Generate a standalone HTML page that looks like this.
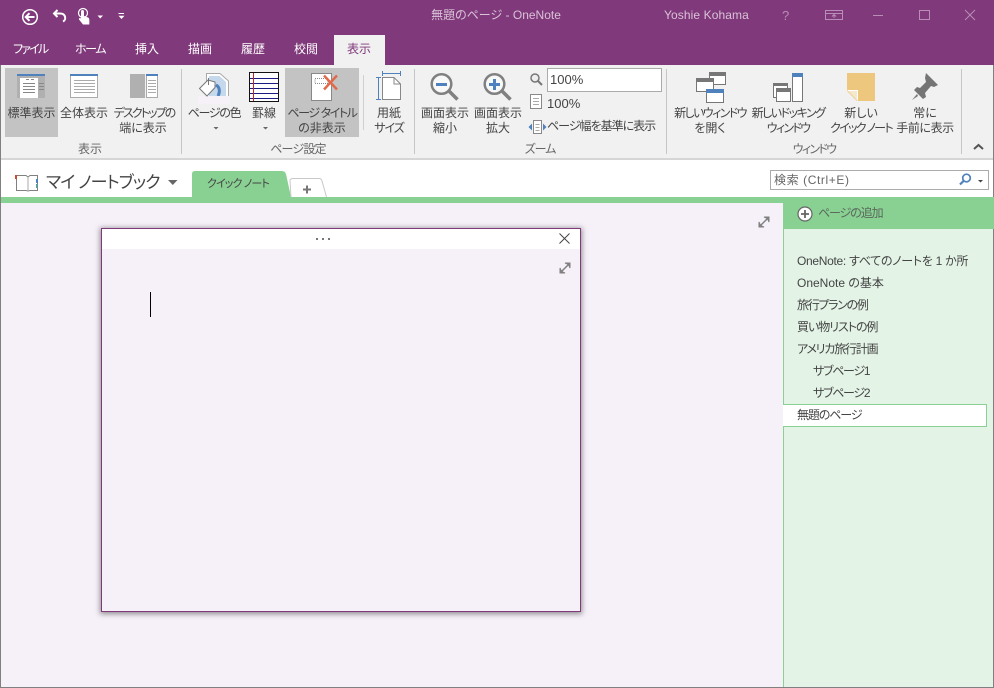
<!DOCTYPE html>
<html lang="ja"><head><meta charset="utf-8"><title>無題のページ - OneNote</title>
<style>
html,body{margin:0;padding:0;width:994px;height:688px;overflow:hidden;background:#f6f0f8;}
body{position:relative;font-family:"Liberation Sans","Noto Sans CJK JP",sans-serif;font-size:12px;color:#444;font-feature-settings:"palt";}
.a{position:absolute;}
.t{position:absolute;white-space:nowrap;line-height:15px;height:15px;color:#444;font-size:12px;}
.c{text-align:center;}
.m{color:#fff;font-size:12px;}
.g{color:#666;}
.p{position:absolute;left:797px;white-space:nowrap;font-size:12px;line-height:16px;color:#444;}
svg{position:absolute;overflow:visible;}
.sep{position:absolute;top:69px;width:1px;height:85px;background:#c6c6c6;}
</style></head><body>
<!-- title bar -->
<div class="a" style="left:0;top:0;width:994px;height:65px;background:#80397b;"></div>
<div class="a" style="left:0;top:65px;width:994px;height:93px;background:#f1f1f1;"></div>
<div class="a" style="left:0;top:158px;width:994px;height:2px;background:#d6d6d6;"></div>
<div class="a" style="left:0;top:160px;width:994px;height:37px;background:#fff;"></div>
<div class="a" style="left:0;top:197px;width:994px;height:6px;background:#89d093;"></div>
<div class="a" style="left:0;top:65px;width:1px;height:622px;background:#808080;"></div>
<div class="a" style="left:993px;top:65px;width:1px;height:622px;background:#808080;"></div>
<div class="a" style="left:0;top:687px;width:994px;height:1px;background:#808080;"></div>

<!-- QAT -->
<svg style="left:0;top:0" width="140" height="32" fill="none" stroke="#fff">
<circle cx="30" cy="17" r="7.3" stroke-width="1.5"/><path d="M34.500 17H26M29.500 13.200L25.700 17L29.500 20.800" stroke-width="2"/>
<path d="M63 21.500C66.500 20 66 13.500 60 13.500H54M57.500 10L54 13.500L57.500 17" stroke-width="2"/>
<path d="M83 24.500L79 19.500C78.500 18 80 17.500 81 18.500V11.500C81 9.500 84 9.500 84 11.500V16L88 17.500C89.500 18 89.500 20 89.300 24.500Z" fill="#fff" stroke="none"/>
<circle cx="83" cy="13" r="4.500" stroke-width="1.200"/>
<path d="M97.500 15.500H103L100.200 18.500Z" fill="#fff" stroke="none"/>
<path d="M118.500 13.500H124" stroke-width="1"/><path d="M118.500 15.800H124.500L121.500 19Z" fill="#fff" stroke="none"/>
</svg>
<div class="t c" style="left:396px;width:200px;top:8px;color:#d9c3d7;">無題のページ - OneNote</div>
<div class="t" style="left:664px;top:8px;color:#d9c3d7;letter-spacing:.1px;">Yoshie Kohama</div>
<svg style="left:770px;top:0" width="224" height="32" fill="none" stroke="#b98db6">
<text x="12" y="20" font-size="13" fill="#b98db6" stroke="none" font-family="Liberation Sans">?</text>
<path d="M55.500 10.500H72.500V19.500H55.500ZM55.500 13.500H72.500M64 18V15M62 16.500L64 14.500L66 16.500"/>
<path d="M103 15.500H113"/>
<path d="M149.500 10.500H159.500V19.500H149.500Z"/>
<path d="M195 10L205 20M205 10L195 20"/>
</svg>

<!-- tabs -->
<div class="t m" style="left:13px;top:42px;letter-spacing:-1.8px;">ファイル</div>
<div class="t m" style="left:75px;top:42px;letter-spacing:-1.4px;">ホーム</div>
<div class="t m" style="left:135px;top:42px;">挿入</div>
<div class="t m" style="left:188px;top:42px;">描画</div>
<div class="t m" style="left:241px;top:42px;">履歴</div>
<div class="t m" style="left:294px;top:42px;">校閲</div>
<div class="a" style="left:334px;top:35px;width:51px;height:30px;background:#f1f1f1;"></div>
<div class="t" style="left:347px;top:42px;color:#80397b;">表示</div>

<!-- highlighted buttons -->
<div class="a" style="left:5px;top:68px;width:53px;height:69px;background:#c3c3c3;"></div>
<div class="a" style="left:285px;top:68px;width:74px;height:69px;background:#c3c3c3;"></div>

<!-- ribbon icons -->
<svg style="left:0;top:65px" width="994" height="95" fill="none" stroke="none">
<!-- standard view -->
<rect x="17" y="9" width="28" height="24" fill="#b0b0b0"/><rect x="17" y="9" width="28" height="2" fill="#4f81bd"/>
<rect x="20" y="13" width="18" height="20" fill="#fff"/>
<path d="M23 18.500H35M23 21.500H35M23 24.500H35M23 27.500H35M39 18.500H44M39 21.500H44M39 24.500H44M26 14.500H29M31 14.500H34" stroke="#888"/>
<!-- full page view -->
<rect x="70.500" y="9.500" width="27" height="23" fill="#fff" stroke="#aaa"/><rect x="70" y="9" width="28" height="2" fill="#4f81bd"/>
<path d="M74 15.500H95M74 18.500H95M74 21.500H95M74 24.500H95M74 27.500H95" stroke="#aaa"/>
<!-- dock -->
<rect x="130" y="9" width="15" height="24" fill="#b0b0b0"/><rect x="146.500" y="9.500" width="11" height="23" fill="#fff" stroke="#aaa"/><rect x="146" y="9" width="12" height="2" fill="#4f81bd"/>
<path d="M148 15.500H156M148 18.500H156M148 21.500H156M148 24.500H156M148 27.500H156" stroke="#aaa"/>
<!-- page color -->
<path d="M206.500 8.500H220L228.500 16V37.500H206.500Z" fill="#fff" stroke="#aaa"/>
<path d="M209 11H219.500L226 17V33H209Z" fill="#c5d8ec"/>
<path d="M216 20C220 22 220 27 218 31" stroke="#4f81bd" stroke-width="3"/>
<rect x="198" y="31" width="32" height="8" fill="#f6f0f8"/>
<path d="M208 15L199.500 23.500L207 31L215 22.500V17Z" fill="#fff" stroke="#777"/>
<path d="M208.500 13V20" stroke="#777"/>
<!-- rule lines -->
<rect x="249.500" y="7.500" width="29" height="29" fill="#fff" stroke="#111"/>
<path d="M250 13.500H278M250 18.500H278M250 23.500H278M250 28.500H278M250 33.500H278" stroke="#1a1a80"/>
<path d="M253.500 8V36" stroke="#d02020"/>
<!-- hide title -->
<rect x="311.500" y="8.500" width="20" height="27" fill="#fff" stroke="#888"/>
<path d="M315 13.500H328V18.500H315Z" stroke="#888" stroke-dasharray="1 1"/>
<path d="M324 10.500L337 24.500M337 10.500L324 24.500" stroke="#e0694a" stroke-width="2.400"/>
<!-- paper size -->
<path d="M378.500 12V35M376 12.500H381M376 34.500H381" stroke="#4f81bd"/>
<path d="M382.500 8.500H400.500M382.500 6V11M400.500 6V11" stroke="#4f81bd"/>
<path d="M382.500 12.500H394L400.500 19V34.500H382.500Z" fill="#fff" stroke="#888"/><path d="M394 12.500V19H400.500" stroke="#888"/>
<!-- zoom out -->
<circle cx="441.500" cy="19" r="9.800" fill="#f8f8f8" stroke="#808080" stroke-width="2.500"/><path d="M449 26L457.500 34.500" stroke="#808080" stroke-width="3.500"/><path d="M436 19.500H447" stroke="#4f81bd" stroke-width="3"/>
<!-- zoom in -->
<circle cx="494.500" cy="19" r="9.800" fill="#f8f8f8" stroke="#808080" stroke-width="2.500"/><path d="M502 26L510.500 34.500" stroke="#808080" stroke-width="3.500"/><path d="M489 19.500H500M494.500 14V25" stroke="#4f81bd" stroke-width="3"/>
<!-- small zoom -->
<circle cx="535" cy="13" r="4" fill="#eee" stroke="#777" stroke-width="1.500"/><path d="M538 16L542 20" stroke="#777" stroke-width="2"/>
<!-- 100% page -->
<rect x="530.500" y="29.500" width="11" height="14" fill="#fff" stroke="#888"/><path d="M533 33.500H539M533 36.500H539M533 39.500H539" stroke="#aaa"/>
<!-- page width -->
<rect x="533.500" y="55.500" width="8" height="13" fill="#fff" stroke="#888"/><path d="M535.500 59.500H539.500M535.500 62.500H539.500M535.500 65.500H539.500" stroke="#aaa"/>
<path d="M532 58.500V65.500L528.500 62ZM543 58.500V65.500L546.500 62Z" fill="#4f81bd"/>
<!-- new window -->
<rect x="709.500" y="7.500" width="16" height="12" fill="#fff" stroke="#777"/><rect x="709" y="7" width="17" height="4" fill="#777"/>
<rect x="696.500" y="13.500" width="17" height="13" fill="#fff" stroke="#777"/><rect x="696" y="13" width="18" height="4" fill="#777"/>
<rect x="706.500" y="24.500" width="17" height="13" fill="#fff" stroke="#777"/><rect x="706" y="24" width="18" height="4" fill="#4f81bd"/>
<!-- new docked -->
<rect x="773.500" y="18.500" width="14" height="14" fill="#fff" stroke="#777"/><rect x="773" y="18" width="15" height="3" fill="#777"/>
<rect x="776.500" y="23.500" width="14" height="13" fill="#fff" stroke="#777"/><rect x="776" y="23" width="15" height="4" fill="#777"/>
<rect x="792.500" y="8.500" width="10" height="28" fill="#fff" stroke="#777"/><rect x="792" y="8" width="11" height="4" fill="#4f81bd"/>
<!-- quick note -->
<path d="M847 8H875V36H857L847 26Z" fill="#edc77e"/><path d="M847.500 25.500H857.500V35.500" fill="#f6e8cc" stroke="#fff"/>
<!-- pin -->
<path d="M926 8L938 20L934 22L931 21L925 28L926 32L923 34L914 25L917 22L920 23L926 17L925 13Z" fill="#757575"/><path d="M917 29L912 35L918 31Z" fill="#757575"/>
<!-- dropdown carets -->
<path d="M213.500 62H218.500L216 64.500Z M263 62H268L265.500 64.500Z" fill="#666"/>
<path d="M651 13.500H656.500L653.800 16.500Z" fill="#666"/>
<path d="M974 84L978.500 80L983 84" stroke="#555" stroke-width="2"/>
</svg>

<div class="t c" style="left:5px;width:53px;top:106px;">標準表示</div>
<div class="t c" style="left:58px;width:52px;top:106px;">全体表示</div>
<div class="t c" style="left:110px;width:68px;top:106px;letter-spacing:-1.9px;">デスクトップの</div>
<div class="t c" style="left:110px;width:66px;top:121px;">端に表示</div>
<div class="t c g" style="left:60px;width:60px;top:142px;">表示</div>
<div class="sep" style="left:181px;"></div>

<div class="t c" style="left:184px;width:60px;top:106px;letter-spacing:-1.3px;">ページの色</div>
<div class="t c" style="left:245px;width:38px;top:106px;">罫線</div>
<div class="t c" style="left:285px;width:74px;top:106px;letter-spacing:-1.4px;">ページ タイトル</div>
<div class="t c" style="left:285px;width:74px;top:121px;">の非表示</div>
<div class="t c g" style="left:268px;width:60px;top:142px;letter-spacing:-.8px;">ページ設定</div>
<div class="a" style="left:363px;top:75px;width:1px;height:55px;background:#d0d0d0;"></div>
<div class="t c" style="left:369px;width:40px;top:106px;">用紙</div>
<div class="t c" style="left:369px;width:40px;top:121px;letter-spacing:-1.1px;">サイズ</div>
<div class="sep" style="left:414px;"></div>

<div class="t c" style="left:418px;width:54px;top:106px;">画面表示</div>
<div class="t c" style="left:418px;width:54px;top:121px;">縮小</div>
<div class="t c" style="left:471px;width:54px;top:106px;">画面表示</div>
<div class="t c" style="left:471px;width:54px;top:121px;">拡大</div>
<div class="a" style="left:547px;top:68px;width:113px;height:22px;background:#fff;border:1px solid #ababab;"></div>
<div class="t" style="left:550px;top:72px;font-size:13px;">100%</div>
<div class="t" style="left:547px;top:96px;font-size:13px;">100%</div>
<div class="t" style="left:547px;top:119px;letter-spacing:-1px;">ページ幅を基準に表示</div>
<div class="t c g" style="left:510px;width:60px;top:142px;letter-spacing:-1px;">ズーム</div>
<div class="sep" style="left:666px;"></div>

<div class="t c" style="left:670px;width:80px;top:106px;letter-spacing:-1.6px;">新しいウィンドウ</div>
<div class="t c" style="left:670px;width:80px;top:121px;">を開く</div>
<div class="t c" style="left:748px;width:80px;top:106px;letter-spacing:-1.5px;">新しいドッキング</div>
<div class="t c" style="left:748px;width:80px;top:121px;letter-spacing:-1.7px;">ウィンドウ</div>
<div class="t c" style="left:828px;width:66px;top:106px;">新しい</div>
<div class="t c" style="left:828px;width:66px;top:121px;letter-spacing:-1.7px;">クイック ノート</div>
<div class="t c" style="left:892px;width:66px;top:106px;">常に</div>
<div class="t c" style="left:892px;width:66px;top:121px;letter-spacing:-.4px;">手前に表示</div>
<div class="t c g" style="left:784px;width:60px;top:142px;letter-spacing:-1.7px;">ウィンドウ</div>
<div class="sep" style="left:961px;"></div>

<!-- notebook row -->
<svg style="left:0;top:160px" width="340" height="40" fill="none">
<path d="M16.500 15.500V30.500H26L28 31L30 30.500H37.500V15.500H30L28 17L26 15.500Z" stroke="#808080" fill="#fff"/>
<path d="M28 17V30" stroke="#aaa"/>
<rect x="15" y="15" width="2" height="4" fill="#d24726"/>
<rect x="36" y="19" width="2" height="4" fill="#4f81bd"/><rect x="36" y="24" width="2" height="4" fill="#5a9a9a"/>
<path d="M168 20H177.500L172.800 25Z" fill="#666"/>
<path d="M192 37V14Q192 11 195 11H282Q285 11 286 14L291 37Z" fill="#89d093"/>
<path d="M291 37L290 21Q290 18.500 293 18.500H319Q321.500 18.500 322 21L326.500 37" fill="#fff" stroke="#c8c8c8"/>
<path d="M303 29.500H311M307 25.500V33.500" stroke="#777" stroke-width="2"/>
</svg>
<div class="t" style="left:46px;top:172px;font-size:17px;line-height:22px;height:22px;color:#444;letter-spacing:-.9px;">マイ ノートブック</div>
<div class="t" style="left:207px;top:177px;font-size:11px;color:#444;letter-spacing:-.9px;">クイック ノート</div>
<div class="a" style="left:770px;top:170px;height:20px;background:#fff;border:1px solid #ababab;box-sizing:border-box;width:219px;"></div>
<div class="t" style="left:774px;top:173px;color:#666;letter-spacing:.6px;">検索 (Ctrl+E)</div>
<svg style="left:950px;top:170px" width="40" height="22" fill="none">
<circle cx="16.500" cy="8" r="3.800" stroke="#4f81bd" stroke-width="1.700"/><path d="M13.500 11L10 14.500" stroke="#4f81bd" stroke-width="2.200"/>
<path d="M28 10H33L30.500 12.500Z" fill="#444"/>
</svg>

<!-- sidebar -->
<div class="a" style="left:783px;top:203px;width:210px;height:484px;background:#e3f3e6;"></div>
<div class="a" style="left:783px;top:203px;width:1px;height:484px;background:#89d093;"></div>
<div class="a" style="left:783px;top:197px;width:211px;height:32px;background:#89d093;"></div>
<svg style="left:790px;top:200px" width="30" height="30" fill="none">
<circle cx="15" cy="14" r="7" fill="#fff" stroke="#666" stroke-width="1.200"/><path d="M11 14H19M15 10V18" stroke="#666" stroke-width="1.800"/>
</svg>
<div class="t" style="left:818px;top:206px;color:#5a6a5c;letter-spacing:-1.1px;">ページの追加</div>
<div class="p" style="top:253px;letter-spacing:-.3px;">OneNote: すべてのノートを 1 か所</div>
<div class="p" style="top:275px;">OneNote の基本</div>
<div class="p" style="top:297px;letter-spacing:-1.3px;">旅行プランの例</div>
<div class="p" style="top:319px;letter-spacing:-1.05px;">買い物リストの例</div>
<div class="p" style="top:341px;letter-spacing:-1.2px;">アメリカ旅行計画</div>
<div class="p" style="top:363px;left:813px;letter-spacing:-1.3px;">サブページ1</div>
<div class="p" style="top:385px;left:813px;letter-spacing:-1.3px;">サブページ2</div>
<div class="a" style="left:783px;top:404px;width:204px;height:23px;background:#fff;border:1px solid #89d093;border-left:none;box-sizing:border-box;"></div>
<div class="p" style="top:407px;letter-spacing:-1.1px;">無題のページ</div>

<!-- expand icon page -->
<svg style="left:757px;top:215px" width="14" height="14" fill="none" stroke="#808080" stroke-width="1.500">
<path d="M2.500 11.500L11.500 2.500"/><path d="M7 2H12V7L10.500 3.500ZM7 12H2V7L3.500 10.500Z" fill="#808080" stroke-width="1"/>
</svg>

<!-- quick note window -->
<div class="a" style="left:101px;top:228px;width:480px;height:384px;box-sizing:border-box;border:1px solid #80397b;background:#f6f0f8;box-shadow:0 1px 5px 1px rgba(60,60,60,.55);"></div>
<div class="a" style="left:102px;top:229px;width:478px;height:20px;background:#fff;"></div>
<div class="a" style="left:316px;top:238px;width:2px;height:2px;background:#777;"></div>
<div class="a" style="left:322px;top:238px;width:2px;height:2px;background:#777;"></div>
<div class="a" style="left:328px;top:238px;width:2px;height:2px;background:#777;"></div>
<svg style="left:559px;top:233px" width="12" height="12" fill="none" stroke="#444"><path d="M.5 .5L10.500 10.500M10.500 .5L.5 10.500"/></svg>
<svg style="left:558px;top:261px" width="14" height="14" fill="none" stroke="#808080" stroke-width="1.500">
<path d="M2.500 11.500L11.500 2.500"/><path d="M7 2H12V7L10.500 3.500ZM7 12H2V7L3.500 10.500Z" fill="#808080" stroke-width="1"/>
</svg>
<div class="a" style="left:150px;top:292px;width:1px;height:25px;background:#000;"></div>
</body></html>
